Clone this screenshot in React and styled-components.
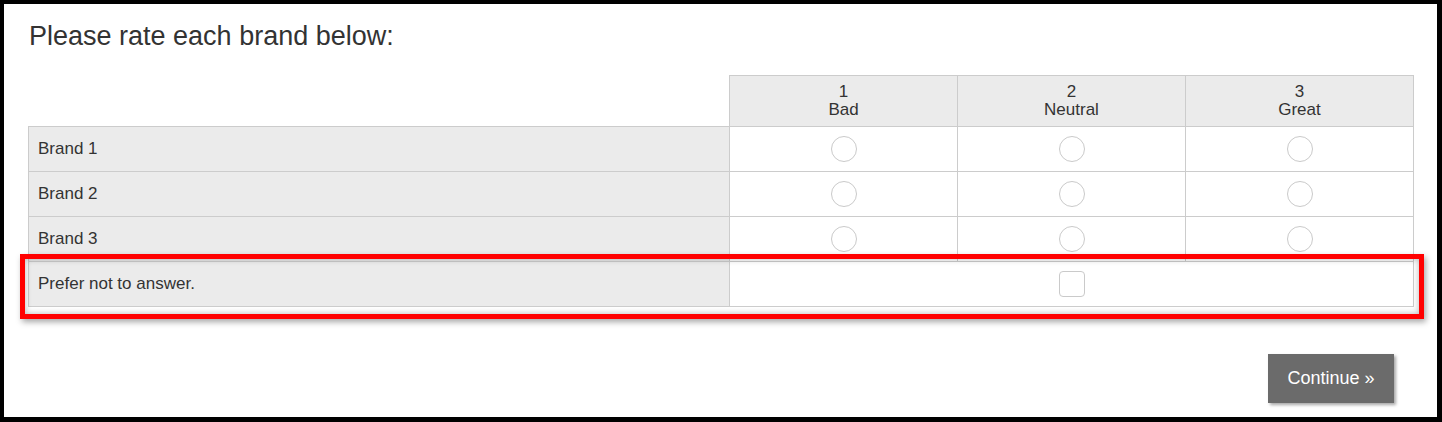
import React from 'react';
import styled, { createGlobalStyle } from 'styled-components';

const GlobalStyle = createGlobalStyle`
  html, body {
    margin: 0;
    padding: 0;
    background: #fff;
  }
  body {
    font-family: "Liberation Sans", Arial, sans-serif;
    color: #333;
  }
`;

const scale = [
  { value: 1, label: 'Bad' },
  { value: 2, label: 'Neutral' },
  { value: 3, label: 'Great' },
];

const brands = ['Brand 1', 'Brand 2', 'Brand 3'];

const Page = styled.div`
  box-sizing: border-box;
  width: 1442px;
  height: 422px;
  border: 4px solid #000;
  border-right-width: 5px;
  border-bottom-width: 5px;
  padding: 17px 24px 0 24px;
  display: flex;
  flex-direction: column;
`;

const Question = styled.h2`
  margin: 0 0 23px 1px;
  font-size: 27px;
  line-height: 31px;
  font-weight: normal;
  color: #333;
`;

const TableWrap = styled.div`
  position: relative;
  width: 1385px;
`;

const Matrix = styled.table`
  width: 1385px;
  border-collapse: collapse;
  table-layout: fixed;
  font-size: 17px;
  color: #333;
`;

const Corner = styled.th`
  border: none;
  background: #fff;
`;

const HeadCell = styled.th`
  height: 50px;
  padding: 0;
  border: 1px solid #ccc;
  background: #ebebeb;
  font-weight: normal;
  line-height: 18px;
  text-align: center;
  vertical-align: middle;
`;

const LabelCell = styled.td`
  height: 44px;
  padding: 0 0 0 9px;
  border: 1px solid #ccc;
  background: #ebebeb;
  text-align: left;
  vertical-align: middle;
`;

const InputCell = styled.td`
  height: 44px;
  padding: 0;
  border: 1px solid #ccc;
  background: #fff;
  vertical-align: middle;
`;

const Centered = styled.div`
  display: flex;
  align-items: center;
  justify-content: center;
`;

const Radio = styled.span`
  box-sizing: border-box;
  display: block;
  width: 26px;
  height: 26px;
  border: 1.5px solid #cacaca;
  border-radius: 50%;
  background: #fff;
`;

const Checkbox = styled.span`
  box-sizing: border-box;
  display: block;
  width: 26px;
  height: 26px;
  border: 1.5px solid #cacaca;
  border-radius: 4px;
  background: #fff;
`;

const Highlight = styled.div`
  position: absolute;
  left: -8px;
  right: -11px;
  bottom: -12px;
  height: 65px;
  box-sizing: border-box;
  border: 5px solid #ff0000;
  box-shadow: 2px 3px 6px rgba(0, 0, 0, 0.35), inset 0 0 6px rgba(0, 0, 0, 0.3);
  pointer-events: none;
`;

const Footer = styled.div`
  box-sizing: border-box;
  display: flex;
  justify-content: flex-end;
  padding: 47px 19px 0 0;
  width: 1385px;
`;

const ContinueButton = styled.button`
  width: 126px;
  height: 49px;
  border: none;
  background: #6b6b6b;
  color: #fff;
  font-family: "Liberation Sans", Arial, sans-serif;
  font-size: 18px;
  box-shadow: 2px 2px 3px rgba(0, 0, 0, 0.35);
  cursor: pointer;
`;

export default function App() {
  return (
    <>
      <GlobalStyle />
      <Page>
        <Question>Please rate each brand below:</Question>
        <TableWrap>
          <Matrix>
            <colgroup>
              <col style={{ width: 701 }} />
              <col style={{ width: 228 }} />
              <col style={{ width: 228 }} />
              <col style={{ width: 228 }} />
            </colgroup>
            <thead>
              <tr>
                <Corner />
                {scale.map((s) => (
                  <HeadCell key={s.value}>
                    {s.value}
                    <br />
                    {s.label}
                  </HeadCell>
                ))}
              </tr>
            </thead>
            <tbody>
              {brands.map((b) => (
                <tr key={b}>
                  <LabelCell>{b}</LabelCell>
                  {scale.map((s) => (
                    <InputCell key={s.value}>
                      <Centered>
                        <Radio />
                      </Centered>
                    </InputCell>
                  ))}
                </tr>
              ))}
              <tr>
                <LabelCell>Prefer not to answer.</LabelCell>
                <InputCell colSpan={3}>
                  <Centered>
                    <Checkbox />
                  </Centered>
                </InputCell>
              </tr>
            </tbody>
          </Matrix>
          <Highlight />
        </TableWrap>
        <Footer>
          <ContinueButton>Continue »</ContinueButton>
        </Footer>
      </Page>
    </>
  );
}
